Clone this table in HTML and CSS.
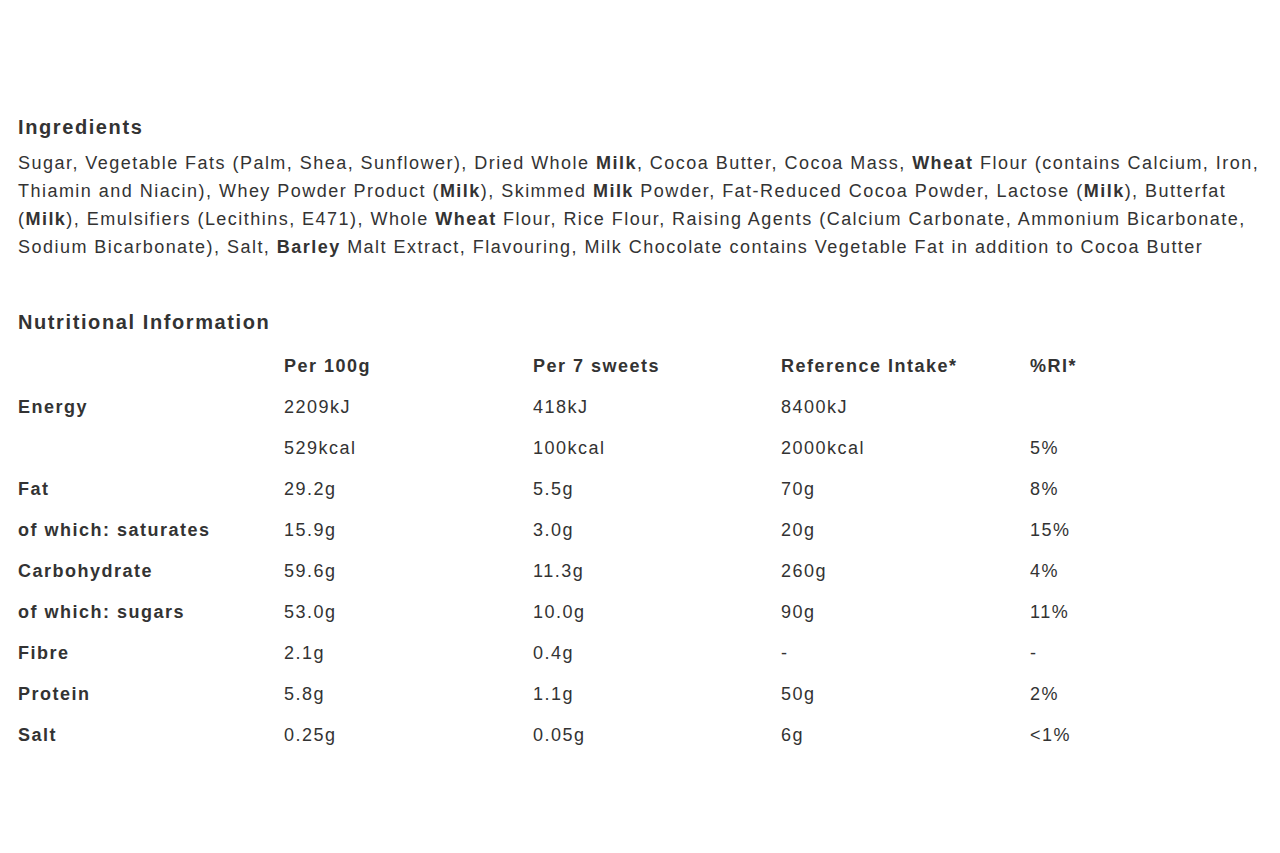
FILE: index.html
```html
<!DOCTYPE html>
<html lang="en">
<head>
<meta charset="utf-8">
<title>Ingredients</title>
<link rel="stylesheet" href="styles.css">
</head>
<body>
<main class="page">
  <section class="ingredients">
    <h2 class="heading">Ingredients</h2>
    <p class="ing-text">Sugar, Vegetable Fats (Palm, Shea, Sunflower), Dried Whole <b>Milk</b>, Cocoa Butter, Cocoa Mass, <b>Wheat</b> Flour (contains Calcium, Iron, Thiamin and Niacin), Whey Powder Product (<b>Milk</b>), Skimmed <b>Milk</b> Powder, Fat-Reduced Cocoa Powder, Lactose (<b>Milk</b>), Butterfat (<b>Milk</b>), Emulsifiers (Lecithins, E471), Whole <b>Wheat</b> Flour, Rice Flour, Raising Agents (Calcium Carbonate, Ammonium Bicarbonate, Sodium Bicarbonate), Salt, <b>Barley</b> Malt Extract, Flavouring, Milk Chocolate contains Vegetable Fat in addition to Cocoa Butter</p>
  </section>
  <section class="nutrition">
    <h2 class="heading">Nutritional Information</h2>
    <div class="table">
      <div class="row head"><span></span><span>Per 100g</span><span>Per 7 sweets</span><span>Reference Intake*</span><span>%RI*</span></div>
      <div class="row"><span class="label">Energy</span><span>2209kJ</span><span>418kJ</span><span>8400kJ</span><span></span></div>
      <div class="row"><span class="label"></span><span>529kcal</span><span>100kcal</span><span>2000kcal</span><span>5%</span></div>
      <div class="row"><span class="label">Fat</span><span>29.2g</span><span>5.5g</span><span>70g</span><span>8%</span></div>
      <div class="row"><span class="label">of which: saturates</span><span>15.9g</span><span>3.0g</span><span>20g</span><span>15%</span></div>
      <div class="row"><span class="label">Carbohydrate</span><span>59.6g</span><span>11.3g</span><span>260g</span><span>4%</span></div>
      <div class="row"><span class="label">of which: sugars</span><span>53.0g</span><span>10.0g</span><span>90g</span><span>11%</span></div>
      <div class="row"><span class="label">Fibre</span><span>2.1g</span><span>0.4g</span><span>-</span><span>-</span></div>
      <div class="row"><span class="label">Protein</span><span>5.8g</span><span>1.1g</span><span>50g</span><span>2%</span></div>
      <div class="row"><span class="label">Salt</span><span>0.25g</span><span>0.05g</span><span>6g</span><span>&lt;1%</span></div>
    </div>
  </section>
</main>
</body>
</html>
```
FILE: styles.css
```css
html, body {
  margin: 0;
  padding: 0;
  background: #ffffff;
}
body {
  font-family: "Liberation Sans", Arial, sans-serif;
  color: #333333;
}
.page {
  padding: 115px 6px 0 18px;
}
.heading {
  font-size: 20px;
  line-height: 24px;
  font-weight: bold;
  margin: 0;
  color: #333333;
  letter-spacing: 1.6px;
}
.ing-text {
  margin: 10px 0 0 0;
  font-size: 18px;
  line-height: 28px;
  letter-spacing: 1.47px;
}
.ing-text b {
  font-weight: bold;
}
.nutrition {
  margin-top: 49px;
}
.table {
  margin-top: 12px;
  display: flex;
  flex-direction: column;
}
.row {
  display: grid;
  grid-template-columns: 266px 249px 248px 249px 1fr;
  height: 41px;
  align-items: center;
  font-size: 18px;
  letter-spacing: 1.5px;
}
.row.head span,
.row .label {
  font-weight: bold;
}
```
